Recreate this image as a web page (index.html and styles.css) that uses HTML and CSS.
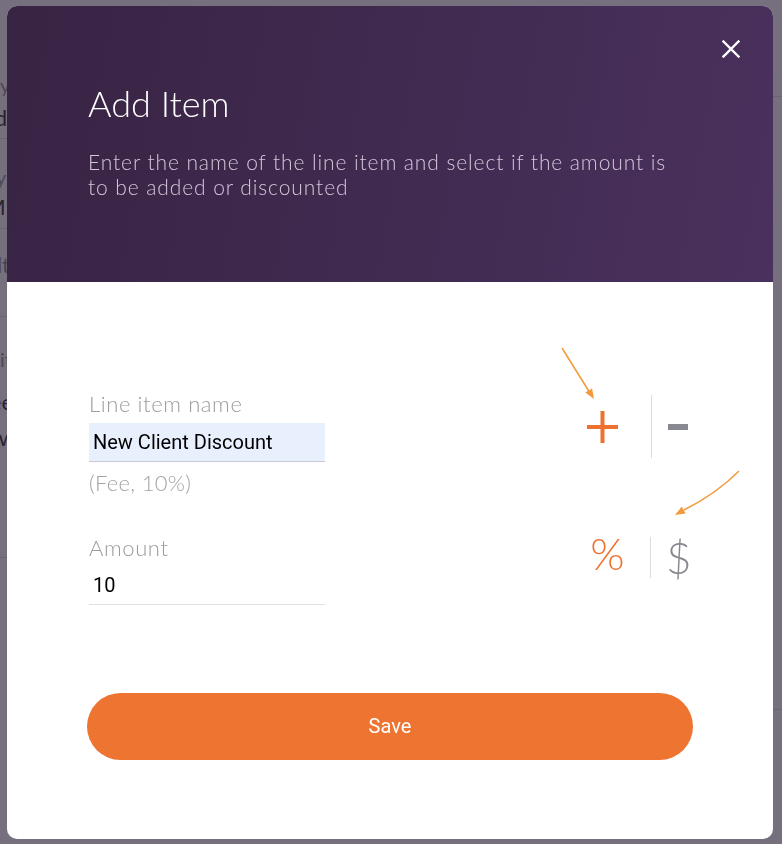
FILE: index.html
```html
<!DOCTYPE html>
<html lang="en">
<head>
<meta charset="utf-8">
<title>Add Item</title>
<link rel="stylesheet" href="styles.css">
</head>
<body>
<div class="page">
  <div class="main">
    <div class="bg-field bf1">
      <div class="bg-label">Country</div>
      <div class="bg-select bs1"><span class="bg-value">United Kingdom</span><span class="caret"></span></div>
    </div>
    <div class="bg-field bf2">
      <div class="bg-label">Display Date Format</div>
      <div class="bg-select bs2"><span class="bg-value">DD/MM/YYYY</span><span class="caret"></span></div>
    </div>
    <div class="bg-field bf3">
      <div class="bg-value bv3">Default Third Party Cost Mark Up</div>
    </div>
    <div class="bg-field bf4">
      <div class="bg-label bl4">Invoice line items</div>
      <div class="bg-value bv4a">Client fees</div>
      <div class="bg-value bv4b">Show new</div>
    </div>
  </div>
  <div class="side"></div>
</div>

<div class="overlay"></div>

<div class="modal">
  <header class="modal-head">
    <div class="close-row">
      <button class="close" aria-label="Close">
        <svg width="18" height="18" viewBox="0 0 18 18"><path d="M1.5 1.5 L16.5 16.5 M16.5 1.5 L1.5 16.5" stroke="#fff" stroke-width="2.4" stroke-linecap="square" fill="none"/></svg>
      </button>
    </div>
    <h1 class="title">Add Item</h1>
    <p class="desc">Enter the name of the line item and select if the amount is<br>to be added or discounted</p>
  </header>

  <div class="modal-body">
    <div class="row">
      <div class="field-col">
        <div class="f-label">Line item name</div>
        <div class="f-input autofill">New Client Discount</div>
        <div class="f-hint">(Fee, 10%)</div>
      </div>
      <div class="toggle t-sign">
        <button class="tg tg-plus" aria-label="Add">
          <svg width="31" height="32" viewBox="0 0 31 32"><path d="M15.5 0 V32 M0 16 H31" stroke="#ee7130" stroke-width="4" fill="none"/></svg>
        </button>
        <span class="tg-div"></span>
        <button class="tg tg-minus" aria-label="Discount">
          <svg width="20" height="6" viewBox="0 0 20 6"><rect x="0" y="0" width="20" height="6" fill="#878890"/></svg>
        </button>
      </div>
    </div>

    <div class="row row-2">
      <div class="field-col">
        <div class="f-label">Amount</div>
        <div class="f-input plain">10</div>
      </div>
      <div class="toggle t-unit">
        <button class="tg tg-pct">%</button>
        <span class="tg-div"></span>
        <button class="tg tg-usd">$</button>
      </div>
    </div>

    <button class="save">Save</button>
  </div>
</div>

<svg class="annot" width="782" height="844" viewBox="0 0 782 844">
  <path d="M562 348 L590 393" stroke="#f29a3c" stroke-width="1.5" fill="none"/>
  <polygon points="594,399 585.3,392.6 592.1,388.4" fill="#f29a3c"/>
  <path d="M739 471 Q716 494 684 510" stroke="#f29a3c" stroke-width="1.5" fill="none"/>
  <polygon points="675,515 681.8,506.6 685.6,513.6" fill="#f29a3c"/>
</svg>
</body>
</html>
```

FILE: styles.css
```css
* { box-sizing: border-box; }

html, body {
  margin: 0;
  padding: 0;
}

body {
  width: 782px;
  height: 844px;
  overflow: hidden;
  position: relative;
  background: #fff;
  font-family: Lato, "Open Sans", sans-serif;
}

/* ---------- background page ---------- */
.page {
  display: flex;
  height: 844px;
}

.main {
  flex: none;
  width: 735px;
  margin-left: -58px;
}

.side {
  flex: 1;
  margin-top: 96px;
  height: 614px;
  border-top: 1px solid #e2e2e2;
  border-bottom: 1px solid #e2e2e2;
}

.bg-field {
  border-bottom: 1px solid #e2e2e2;
}

.bg-label {
  font-size: 20px;
  line-height: 24px;
  color: #9a9a9a;
}

.bg-value {
  font-size: 22px;
  line-height: 28px;
  color: #333;
}

.bg-select {
  display: flex;
  justify-content: space-between;
  align-items: center;
}

.caret {
  width: 0;
  height: 0;
  border-left: 5px solid transparent;
  border-right: 5px solid transparent;
  border-top: 5px solid #666;
}

.bf1 { padding-top: 73px; padding-bottom: 6.5px; }
.bf1 .bg-label { margin-left: -3px; }
.bs1 { width: 665px; margin-top: 6.5px; }

.bf2 { padding-top: 26px; padding-bottom: 7.5px; }
.bs2 { width: 650px; margin-top: 3.5px; }

.bf3 { padding-top: 21.5px; padding-bottom: 37.5px; }
.bv3 { margin-left: -4px; color: #888; }

.bf4 { padding-top: 30px; padding-bottom: 105.5px; }
.bl4 { margin-left: -46px; }
.bv4a { margin-top: 16.5px; margin-left: -22px; }
.bv4b { margin-top: 8px; margin-left: -26px; }

.overlay {
  position: fixed;
  inset: 0;
  background: rgba(34, 22, 45, 0.62);
}

/* ---------- modal ---------- */
.modal {
  position: absolute;
  left: 7px;
  top: 6px;
  width: 766px;
  height: 833px;
  border-radius: 10px;
  overflow: hidden;
  background: #fff;
  display: flex;
  flex-direction: column;
}

.modal-head {
  flex: none;
  height: 276px;
  padding: 34px 33px 0 81px;
  background: linear-gradient(100deg, rgba(46, 24, 58, 0.95) 0%, rgba(54, 31, 70, 0.95) 50%, rgba(64, 38, 85, 0.95) 100%);
  color: #fff;
}

.close-row {
  display: flex;
  justify-content: flex-end;
}

.close {
  width: 18px;
  height: 18px;
  padding: 0;
  border: 0;
  background: none;
  display: block;
}

.close svg { display: block; }

.title {
  margin: 23px 0 0;
  font-size: 36px;
  line-height: 44px;
  font-weight: 300;
  color: #fff;
}

.desc {
  margin: 24px 0 0;
  font-size: 21px;
  line-height: 25px;
  font-weight: 300;
  letter-spacing: 0.9px;
  color: #d3c8da;
  white-space: nowrap;
}

.modal-body {
  flex: 1;
  display: flex;
  flex-direction: column;
  padding-top: 109px;
}

.row {
  display: flex;
  justify-content: space-between;
  align-items: flex-start;
  margin: 0 85px 0 82px;
}

.row-2 { margin-top: 38.5px; }

.field-col { width: 236px; }

.f-label {
  font-size: 22px;
  line-height: 26px;
  font-weight: 300;
  letter-spacing: 0.6px;
  color: #9b9b9b;
}

.f-input {
  margin-top: 6px;
  height: 39px;
  padding: 0 4px;
  font-family: Roboto, "Liberation Sans", sans-serif;
  font-size: 20px;
  line-height: 39px;
  color: #000;
  border-bottom: 1px solid #e0e0e0;
}

.f-input.autofill {
  background: #e8f0fe;
  border-bottom-color: #c6cad5;
}

.f-input.plain { margin-top: 5px; }

.f-hint {
  margin-top: 8px;
  font-size: 22px;
  line-height: 26px;
  font-weight: 300;
  letter-spacing: 0.3px;
  color: #a3a3a3;
}

.toggle {
  display: flex;
  align-items: center;
}

.t-sign { margin-top: 4px; height: 63px; }
.t-unit { margin-top: 2.5px; height: 41px; }

.tg {
  padding: 0;
  border: 0;
  background: none;
  display: block;
  font-family: Lato, "Open Sans", sans-serif;
}

.tg svg { display: block; }

.tg-div {
  width: 1px;
  align-self: stretch;
  background: #dcdcdc;
}

.tg-plus { margin-right: 33px; }
.tg-minus { margin-left: 16px; }

.tg-pct {
  width: 35px;
  margin-right: 25px;
  margin-top: -8px;
  font-size: 44px;
  line-height: 41px;
  font-weight: 300;
  color: #ee7130;
  text-align: center;
}

.tg-usd {
  width: 22px;
  margin-left: 15px;
  font-size: 44px;
  line-height: 41px;
  font-weight: 300;
  color: #878890;
  text-align: center;
}

.save {
  align-self: center;
  margin-top: 88px;
  width: 606px;
  height: 67px;
  border: 0;
  border-radius: 34px;
  background: #ed7431;
  color: #fff;
  font-family: Roboto, "Liberation Sans", sans-serif;
  font-size: 20px;
  line-height: 64px;
}

.annot {
  position: absolute;
  left: 0;
  top: 0;
  pointer-events: none;
}
```
